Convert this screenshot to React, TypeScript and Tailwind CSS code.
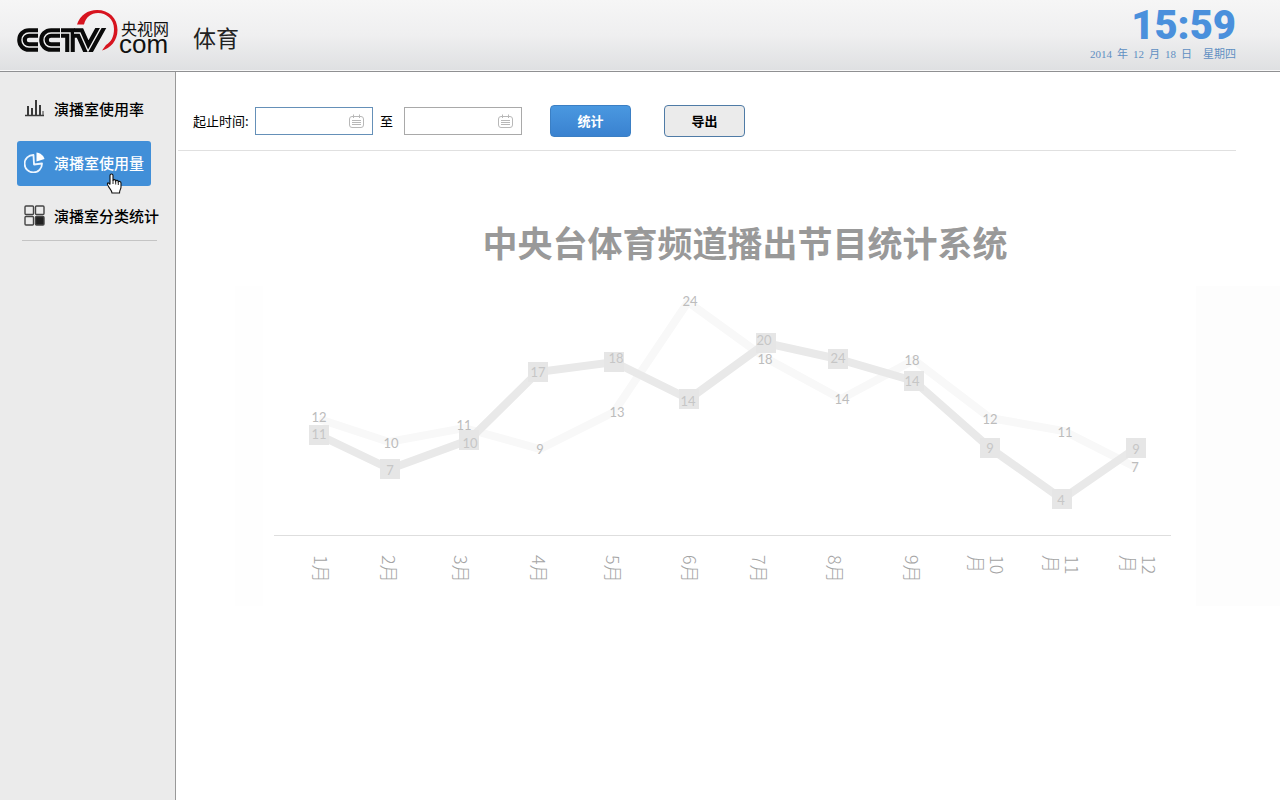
import React from "react";

type Point = { x: number; y: number };
type Label = Point & { text: string };

const mainLine: Point[] = [
  { x: 143, y: 155 }, { x: 214, y: 189 }, { x: 293, y: 160 }, { x: 362, y: 92 },
  { x: 438, y: 82 }, { x: 513, y: 119 }, { x: 590, y: 63 }, { x: 662, y: 79 },
  { x: 738, y: 101 }, { x: 814, y: 168 }, { x: 886, y: 219 }, { x: 960, y: 168 },
];
const mainLabels: Label[] = [
  { x: 143, y: 155, text: "11" }, { x: 214, y: 191, text: "7" }, { x: 294, y: 164, text: "10" },
  { x: 362, y: 93, text: "17" }, { x: 440, y: 79, text: "18" }, { x: 512, y: 122, text: "14" },
  { x: 588, y: 61, text: "20" }, { x: 662, y: 79, text: "24" }, { x: 736, y: 102, text: "14" },
  { x: 814, y: 169, text: "9" }, { x: 885, y: 221, text: "4" }, { x: 960, y: 170, text: "9" },
];
const backLine: Point[] = [
  { x: 143, y: 139 }, { x: 213, y: 162 }, { x: 288, y: 148 }, { x: 364, y: 169 },
  { x: 438, y: 132 }, { x: 512, y: 22 }, { x: 588, y: 77 }, { x: 665, y: 119 },
  { x: 738, y: 80 }, { x: 814, y: 138 }, { x: 888, y: 151 }, { x: 961, y: 188 },
];
const backLabels: Label[] = [
  { x: 143, y: 138, text: "12" }, { x: 215, y: 164, text: "10" }, { x: 288, y: 146, text: "11" },
  { x: 364, y: 170, text: "9" }, { x: 441, y: 133, text: "13" }, { x: 514, y: 22, text: "24" },
  { x: 589, y: 80, text: "18" }, { x: 666, y: 120, text: "14" }, { x: 736, y: 81, text: "18" },
  { x: 814, y: 140, text: "12" }, { x: 889, y: 153, text: "11" }, { x: 959, y: 188, text: "7" },
];
const months = [
  { x: 138, n: "1" }, { x: 206, n: "2" }, { x: 278, n: "3" }, { x: 356, n: "4" },
  { x: 430, n: "5" }, { x: 507, n: "6" }, { x: 576, n: "7" }, { x: 652, n: "8" },
  { x: 729, n: "9" }, { x: 814, n: "10" }, { x: 889, n: "11" }, { x: 966, n: "12" },
];

const toPoints = (line: Point[]) => line.map((p) => `${p.x},${p.y}`).join(" ");

function Logo() {
  const letters = (
    <>
      <path d="M38 33H29C25 33 22 36 22 40S25 47 29 47H38" />
      <path d="M60 33H51C47 33 44 36 44 40S47 47 51 47H60" />
      <path d="M61 33H70V54" />
      <path d="M74 33H80L88 51L103 24" />
    </>
  );
  return (
    <a href="#" aria-label="CCTV.com 央视网" className="flex items-start text-[#111]">
      <svg width="103" height="48" viewBox="16 8 103 48" fill="none" aria-hidden="true">
        <clipPath id="letter-band">
          <rect x="16" y="28" width="92" height="24" />
        </clipPath>
        <path
          d="M77 24.500C80 15 88 10 97 10C109 10 117.500 18 117.500 30C117.500 41 110 48.500 102 50.500L106 45C111 42 114 37 114 29C114 19 106 13 98 13C91 13 86 17 84 24.500Z"
          fill="#d7141f"
        />
        <g clipPath="url(#letter-band)">
          <g stroke="#0a0a0a" strokeWidth="9.600">{letters}</g>
          <g stroke="#f0f0f0" strokeWidth="1.400">{letters}</g>
        </g>
      </svg>
      <span className="flex flex-col pt-3">
        <span className="pl-0.5 text-base leading-4">央视网</span>
        <span className="font-['Liberation_Sans',sans-serif] text-[26px] leading-4">com</span>
      </span>
    </a>
  );
}

function BarsIcon() {
  return (
    <svg width="21" height="21" viewBox="0 0 21 21" fill="none" stroke="#3a3a3a" strokeWidth="2" aria-hidden="true" className="shrink-0">
      <path d="M1 17.500H20" strokeWidth="1.500" />
      <path d="M4 17V8M8 17V10M12 17V2M16 17V7" />
      <path d="M19 17V13" strokeWidth="1" />
    </svg>
  );
}

function PieIcon() {
  return (
    <svg width="21" height="21" viewBox="0 0 21 21" fill="none" aria-hidden="true" className="shrink-0">
      <path d="M9.500 3A8.700 8.700 0 1 0 18 11.500L10 12.500Z" stroke="#eef6ff" strokeWidth="1.800" strokeLinejoin="round" />
      <path d="M12.500 9.500V0.500C16.500 1 19.500 3.500 20.500 7Z" fill="#fff" />
    </svg>
  );
}

function BlocksIcon() {
  return (
    <svg width="21" height="21" viewBox="0 0 21 21" fill="none" stroke="#444" strokeWidth="1.400" aria-hidden="true" className="shrink-0">
      <rect x="1" y="1" width="8.500" height="8.500" rx="1" />
      <rect x="11.500" y="1" width="8.500" height="8.500" rx="1" />
      <rect x="1" y="11.500" width="8.500" height="8.500" rx="1" />
      <rect x="11.500" y="11.500" width="8.500" height="8.500" rx="1" fill="#222" />
    </svg>
  );
}

function HandPointer() {
  return (
    <svg className="absolute left-[89px] top-8 z-10" width="17" height="22" viewBox="0 0 17 22" aria-hidden="true">
      <path
        d="M5.500 1C6.500 1 7 1.700 7 2.500V7.500C7.300 6.300 9.500 6.300 9.700 8C10.200 7 12.200 7.200 12.300 8.700C13 8 15 8.300 15 10V14C15 16 13.500 17 13.500 20H6C6 17.500 3.500 15.500 2.500 13.500C1.500 12 1 10.800 1.500 10.200C2.300 9.400 3.500 10.500 4 11.500V2.500C4 1.700 4.500 1 5.500 1Z"
        fill="#fff"
        stroke="#111"
        strokeWidth="1.100"
      />
      <path d="M7 7V11M9.700 8V11.500M12.300 8.700V12" stroke="#111" strokeWidth="0.900" />
    </svg>
  );
}

function CalendarIcon() {
  return (
    <svg width="15" height="15" viewBox="0 0 15 15" fill="none" stroke="#b8b8b8" aria-hidden="true" className="shrink-0">
      <rect x="0.500" y="2.500" width="14" height="11" rx="2.500" />
      <path d="M4.500 0.500V4M10.500 0.500V4M3 6.500H12M3 8.500H12M3 10.500H12" />
    </svg>
  );
}

function DateField({ id, label, focused }: { id: string; label: string; focused?: boolean }) {
  return (
    <div
      className={
        focused
          ? "flex h-7 w-[118px] items-center border border-[#6590b8] bg-white pr-2"
          : "flex h-7 w-[118px] items-center border border-[#a9a9a9] bg-white pr-2"
      }
    >
      <input id={id} type="text" aria-label={label} className="h-full min-w-0 flex-1 bg-transparent px-2 text-xs outline-none" />
      <CalendarIcon />
    </div>
  );
}

function TrendChart() {
  return (
    <svg viewBox="0 0 1104 330" className="mt-3 w-full" role="img" aria-label="播出节目统计">
      <rect x="59" y="6" width="28" height="320" fill="#fefefe" />
      <rect x="1020" y="6" width="84" height="320" fill="#fdfdfd" />
      <polyline points={toPoints(backLine)} fill="none" stroke="#f8f8f8" strokeWidth="8" />
      <polyline points={toPoints(mainLine)} fill="none" stroke="#e9e9e9" strokeWidth="8" />
      {mainLine.map((p) => (
        <rect key={p.x} x={p.x - 10} y={p.y - 10} width="20" height="20" fill="#e6e6e6" />
      ))}
      <g className="font-['Lato',sans-serif] text-[13px]" textAnchor="middle">
        <g fill="#c6c6c6">
          {mainLabels.map((l) => (
            <text key={l.x} x={l.x} y={l.y + 4}>{l.text}</text>
          ))}
        </g>
        <g fill="#bcbcbc">
          {backLabels.map((l) => (
            <text key={l.x} x={l.x} y={l.y + 4}>{l.text}</text>
          ))}
        </g>
      </g>
      <path d="M98 255.500H995" stroke="#dedede" />
      <g className="text-lg font-light" fill="#a4a4a4">
        {months.map((m) =>
          m.n.length === 1 ? (
            <text key={m.n} transform={`translate(${m.x} 275) rotate(90)`}>{m.n}月</text>
          ) : (
            <g key={m.n}>
              <text transform={`translate(${m.x} 275) rotate(90)`}>{m.n}</text>
              <text transform={`translate(${m.x - 21} 275) rotate(90)`}>月</text>
            </g>
          )
        )}
      </g>
    </svg>
  );
}

export default function App() {
  return (
    <div className="flex min-h-screen flex-col bg-white font-['Noto_Sans_CJK_SC',sans-serif] text-black">
      <header className="flex h-[71px] items-start justify-between border-b border-[#f8f8f8] bg-linear-to-b from-[#f6f6f6] via-[#efeff0] to-[#dfe0e2] pl-4 pr-11">
        <div className="flex items-start pt-2">
          <Logo />
          <h1 className="pl-6 pt-3 text-[23px] leading-[34px] text-[#222]">体育</h1>
        </div>
        <div className="flex flex-col items-end pt-2">
          <time className="font-['Roboto',sans-serif] text-[40px] font-black leading-9 text-[#4a90dc]">15:59</time>
          <div className="flex gap-[5px] pt-0.5 font-['Liberation_Serif','Noto_Sans_CJK_SC',serif] text-[11px] leading-4 text-[#5f8fc2]">
            <span>2014</span>
            <span>年</span>
            <span>12</span>
            <span>月</span>
            <span>18</span>
            <span>日</span>
            <span className="pl-1.5">星期四</span>
          </div>
        </div>
      </header>
      <div className="flex flex-1 border-t border-[#8f9092]">
        <aside className="w-44 shrink-0 border-r border-[#999] bg-[#ebebeb] pl-[17px] pt-4">
          <nav className="flex flex-col gap-2 whitespace-nowrap text-[15px] font-medium leading-5">
            <a href="#rate" className="flex h-[45px] w-[134px] items-center gap-[9px] pb-1 pl-[7px]">
              <BarsIcon />
              <span>演播室使用率</span>
            </a>
            <a
              href="#amount"
              aria-current="page"
              className="relative flex h-[45px] w-[134px] items-center gap-[9px] rounded-[3px] bg-[#418fd8] pb-0.5 pl-[7px] text-white"
            >
              <PieIcon />
              <span>演播室使用量</span>
              <HandPointer />
            </a>
            <a href="#category" className="flex h-[45px] w-[134px] items-center gap-[9px] pb-0.5 pl-[7px]">
              <BlocksIcon />
              <span>演播室分类统计</span>
            </a>
          </nav>
          <hr className="ml-[5px] mt-px w-[135px] border-t border-[#c4c4c4]" />
        </aside>
        <main className="min-w-0 flex-1">
          <form className="ml-0.5 mr-11 flex items-center border-b border-[#e0e0e0] pb-[13px] pl-[15px] pt-[33px]" onSubmit={(e) => e.preventDefault()}>
            <label htmlFor="start" className="w-[62px] whitespace-nowrap text-[13px]">起止时间:</label>
            <DateField id="start" label="开始时间" focused />
            <label htmlFor="end" className="w-[31px] pl-[7px] text-[13px]">至</label>
            <DateField id="end" label="结束时间" />
            <button
              type="submit"
              className="ml-7 h-8 w-[81px] rounded border border-[#3b7fc4] bg-linear-to-b from-[#4a98e0] to-[#3a82d0] text-[13px] font-bold text-white"
            >
              统计
            </button>
            <button type="button" className="ml-[33px] h-8 w-[81px] rounded border border-[#4f7ba6] bg-[#ebebeb] text-[13px] font-bold">
              导出
            </button>
          </form>
          <h2 className="mt-[65px] pl-[34px] text-center text-[35px] font-bold leading-[52px] text-[#999]">中央台体育频道播出节目统计系统</h2>
          <TrendChart />
        </main>
      </div>
    </div>
  );
}
